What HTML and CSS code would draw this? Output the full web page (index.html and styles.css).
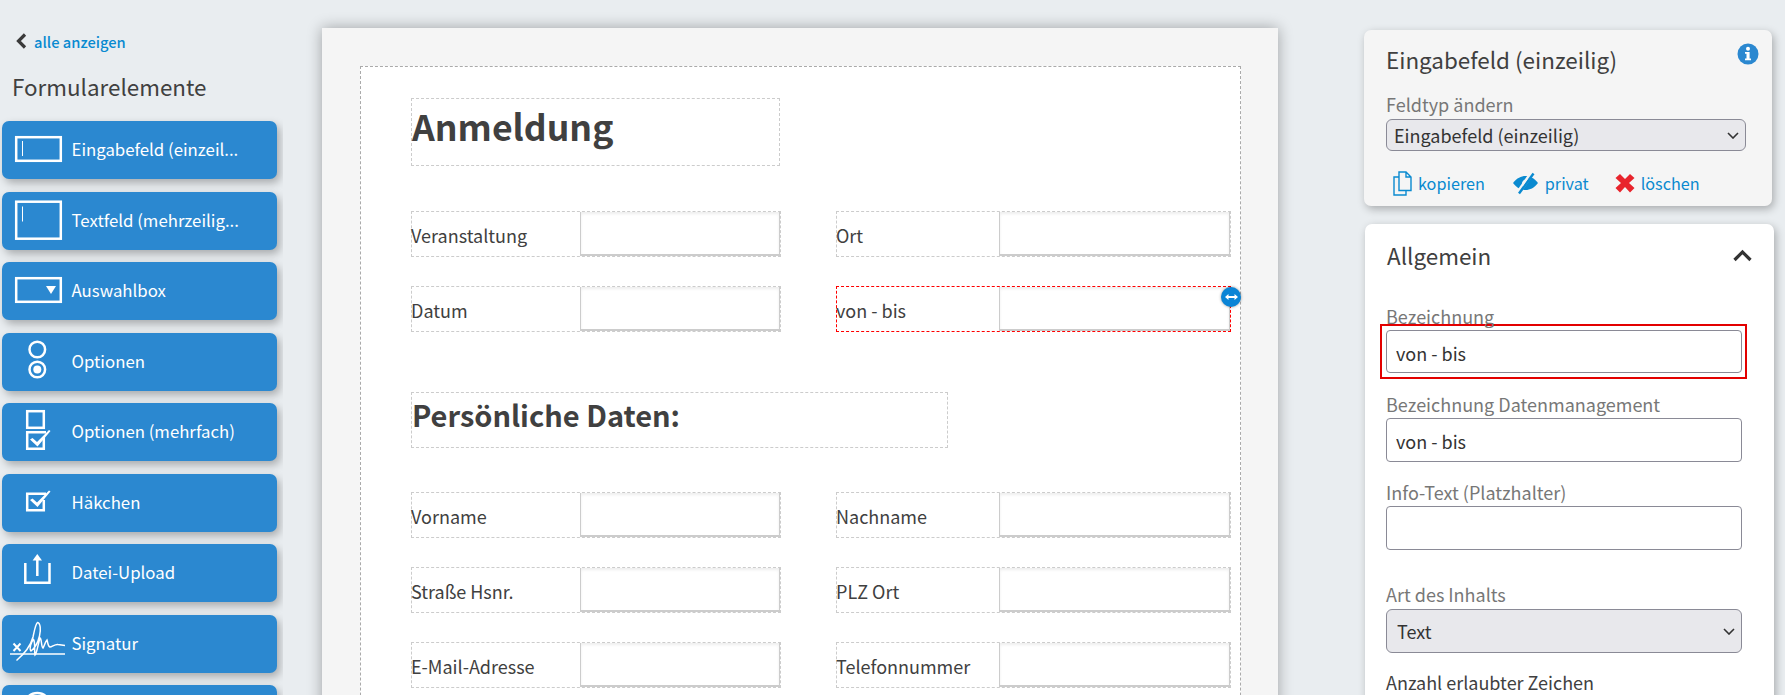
FILE: index.html
```html
<!DOCTYPE html>
<html lang="de">
<head>
<meta charset="utf-8">
<title>Formular</title>
<link rel="stylesheet" href="styles.css">
</head>
<body>
<aside class="sidebar">
  <a class="back">
    <svg class="back-icon" width="12" height="16" viewBox="0 0 12 16"><path d="M10 1.500L3.500 8L10 14.500" fill="none" stroke="#3a3a3a" stroke-width="3.200"/></svg>
    <span>alle anzeigen</span>
  </a>
  <h2 class="side-title">Formularelemente</h2>
  <div class="tool-list">
    <div class="tool">
      <svg class="tool-icon" viewBox="0 0 58 46"><rect class="ln" x="6.2" y="10.2" width="44.6" height="23.6"/><path class="thin" d="M12.5 14V29"/></svg>
      <span class="tool-label">Eingabefeld (einzeil...</span>
    </div>
    <div class="tool">
      <svg class="tool-icon" viewBox="0 0 58 46"><rect class="ln" x="6.2" y="3.7" width="44.6" height="37"/><path class="thin" d="M12.5 8.500V23.500"/></svg>
      <span class="tool-label">Textfeld (mehrzeilig...</span>
    </div>
    <div class="tool">
      <svg class="tool-icon" viewBox="0 0 58 46"><rect class="ln" x="6.2" y="10.2" width="44.6" height="23.6"/><path class="fl" d="M36 18H46L41 26Z"/></svg>
      <span class="tool-label">Auswahlbox</span>
    </div>
    <div class="tool">
      <svg class="tool-icon" viewBox="0 0 58 46"><circle class="ln" cx="27.300" cy="10.500" r="7.800"/><circle class="ln" cx="27.300" cy="30.500" r="7.800"/><circle class="fl" cx="27.300" cy="30.500" r="4"/></svg>
      <span class="tool-label">Optionen</span>
    </div>
    <div class="tool">
      <svg class="tool-icon" viewBox="0 0 58 46"><rect class="ln" x="17.200" y="2.200" width="16.600" height="16.600"/><path class="ln" d="M33.800 28V39.800H17.200V23.200H36"/><path class="fl" d="M20 30.500L22.500 29L27 33L39 21L40.500 22L27.500 37.500Z"/></svg>
      <span class="tool-label">Optionen (mehrfach)</span>
    </div>
    <div class="tool">
      <svg class="tool-icon" viewBox="0 0 58 46"><path class="ln" d="M33.800 20V30.300H17.200V13.700H36"/><path class="fl" d="M20 20L22.500 18.500L27 22.500L39 10.500L40.500 11.500L27.500 27Z"/></svg>
      <span class="tool-label">Häkchen</span>
    </div>
    <div class="tool">
      <svg class="tool-icon" viewBox="0 0 58 46"><path class="ln" d="M15.300 13V32.800H39.500V13"/><path class="ln" d="M27.300 9V26"/><path class="fl" d="M27.300 4L32 10.500H22.600Z"/></svg>
      <span class="tool-label">Datei-Upload</span>
    </div>
    <div class="tool">
      <svg class="tool-icon" viewBox="0 0 58 46"><path class="thin2" d="M0 33H55"/><path class="sig-x" d="M3.500 22.500L10.500 30M10.500 22.500L3.500 30"/><path class="sig" d="M6.500 39.500C13 34 20 27 23 16C24.500 9 25.500 3 27.500 1.500C30.500 2 31 9 29.500 15C28 21 25 27 21 30C19 28 21 21 23.500 18.500C25.500 21 24 29 25 34C27 32 28 23 30 17C32 18 31 26 33 27C34.500 25 35 21 37 19C38 22 38 26 40 26C42 26 45 23 48 23.500L55 24.500"/></svg>
      <span class="tool-label">Signatur</span>
    </div>
    <div class="tool">
      <svg class="tool-icon" viewBox="0 0 58 46"><circle class="ln" cx="27.300" cy="15" r="13"/></svg>
    </div>
  </div>
</aside>

<main class="paper">
  <div class="sheet">
    <div class="head-box head-large"><h1 class="h-large">Anmeldung</h1></div>
    <div class="rows rows-first">
      <div class="field"><span class="field-label">Veranstaltung</span><input class="field-input" type="text"></div>
      <div class="field"><span class="field-label">Ort</span><input class="field-input" type="text"></div>
      <div class="field"><span class="field-label">Datum</span><input class="field-input" type="text"></div>
      <div class="field field-active"><span class="field-label">von - bis</span><input class="field-input" type="text">
        <span class="handle"><svg width="15" height="8" viewBox="0 0 14 8"><path d="M0.500 4L4 1V3H10V1L13.500 4L10 7V5H4V7Z" fill="#fff"/></svg></span>
      </div>
    </div>
    <div class="head-box head-small"><h2 class="h-small">Persönliche Daten:</h2></div>
    <div class="rows rows-second">
      <div class="field"><span class="field-label">Vorname</span><input class="field-input" type="text"></div>
      <div class="field"><span class="field-label">Nachname</span><input class="field-input" type="text"></div>
      <div class="field"><span class="field-label">Straße Hsnr.</span><input class="field-input" type="text"></div>
      <div class="field"><span class="field-label">PLZ Ort</span><input class="field-input" type="text"></div>
      <div class="field"><span class="field-label">E-Mail-Adresse</span><input class="field-input" type="text"></div>
      <div class="field"><span class="field-label">Telefonnummer</span><input class="field-input" type="text"></div>
    </div>
  </div>
</main>

<aside class="props">
  <section class="card card-type">
    <span class="info"><svg width="22" height="22" viewBox="0 0 22 22"><circle cx="11" cy="11" r="10.500" fill="#2b88d0"/><circle cx="11" cy="5.800" r="2" fill="#fff"/><path d="M8 9H12.600V15.500H14V17.300H8V15.500H9.500V10.800H8Z" fill="#fff"/></svg></span>
    <h3 class="card-title">Eingabefeld (einzeilig)</h3>
    <label class="prop-label label-type">Feldtyp ändern</label>
    <div class="select-wrap wrap-type">
      <select class="prop-select select-type"><option>Eingabefeld (einzeilig)</option></select>
      <svg class="select-arrow" width="12" height="7" viewBox="0 0 12 7"><path d="M1 1L6 6L11 1" fill="none" stroke="#333" stroke-width="1.600"/></svg>
    </div>
    <div class="actions">
      <a class="action action-copy">
        <svg width="19" height="25" viewBox="0 0 19 25"><path d="M6 6H1V24H13V19.500M6 1H13L18 6V19.500H6Z M13 1V6H18" fill="none" stroke="#0a8ad0" stroke-width="1.400"/></svg>
        <span>kopieren</span>
      </a>
      <a class="action action-private">
        <svg width="27" height="24" viewBox="0 0 27 24"><path d="M1 12C5 7 9 5 13.500 5C18 5 22 7 26 12C22 17 18 19 13.500 19C9 19 5 17 1 12Z" fill="#0a8ad0"/><path d="M20 2L6 22" stroke="#f5f5f5" stroke-width="4.500"/><path d="M21.500 2.500L7 22.500" stroke="#0a8ad0" stroke-width="2.400"/><path d="M13 8.500L16 7.500L11 15C9 13 10 10 13 8.500Z" fill="#f5f5f5"/></svg>
        <span>privat</span>
      </a>
      <a class="action action-delete">
        <svg width="20" height="20" viewBox="0 0 20 20"><path d="M5 1L10 6L15 1L19.500 5L14 10L19.500 15L15 19.500L10 14L5 19.500L0.500 15L6 10L0.500 5Z" fill="#e8242c"/></svg>
        <span>löschen</span>
      </a>
    </div>
  </section>

  <section class="card card-general">
    <header class="general-head">
      <h3 class="card-title">Allgemein</h3>
      <svg width="19" height="13" viewBox="0 0 19 13"><path d="M1.500 11L9.500 3L17.500 11" fill="none" stroke="#333" stroke-width="3.200"/></svg>
    </header>
    <label class="prop-label label-first">Bezeichnung</label>
    <div class="marked"><input class="prop-input input-marked" type="text" value="von - bis"></div>
    <label class="prop-label label-second">Bezeichnung Datenmanagement</label>
    <input class="prop-input" type="text" value="von - bis">
    <label class="prop-label label-third">Info-Text (Platzhalter)</label>
    <input class="prop-input" type="text">
    <label class="prop-label label-fourth">Art des Inhalts</label>
    <div class="select-wrap wrap-content">
      <select class="prop-select select-content"><option>Text</option></select>
      <svg class="select-arrow" width="12" height="7" viewBox="0 0 12 7"><path d="M1 1L6 6L11 1" fill="none" stroke="#333" stroke-width="1.600"/></svg>
    </div>
    <label class="prop-label label-dark">Anzahl erlaubter Zeichen</label>
  </section>
</aside>
</body>
</html>
```
FILE: styles.css
```css
* { box-sizing: border-box; }
html, body { margin: 0; height: 695px; overflow: hidden; }
body {
  display: flex;
  align-items: flex-start;
  background: #e9edf0;
  font-family: "Noto Sans CJK SC", "Source Sans Pro", sans-serif;
  color: #404040;
}
h1, h2, h3 { margin: 0; }

/* sidebar */
.sidebar { flex: 0 0 283px; width: 283px; height: 695px; overflow: hidden; }
.back { display: flex; align-items: center; margin: 31px 0 0 15px; height: 20px; color: #0a8ad0; font-size: 14.700px; font-weight: 500; }
.back-icon { margin-right: 7px; }
.side-title { margin: 19px 0 0 12px; font-size: 22.400px; line-height: 32px; font-weight: 400; color: #404040; }
.tool-list { display: flex; flex-direction: column; gap: 12.5px; margin: 19px 0 0 2px; width: 275px; }
.tool {
  flex: 0 0 58px;
  height: 58px;
  display: flex;
  align-items: center;
  padding-left: 8px;
  background: #2b88d0;
  border-radius: 7px;
  color: #fff;
  box-shadow: 3px 4px 8px rgba(0, 0, 0, .28);
}
.tool-icon { flex: 0 0 58px; width: 58px; height: 46px; margin-right: 3.500px; }
.tool-label { display: block; padding-bottom: 2px; white-space: nowrap; font-size: 16.800px; line-height: 24px; }
.ln { fill: none; stroke: #fff; stroke-width: 2.500; }
.thin { fill: none; stroke: #fff; stroke-width: 1; }
.thin2 { fill: none; stroke: #fff; stroke-width: 1.300; }
.fl { fill: #fff; }
.sig { fill: none; stroke: #fff; stroke-width: 1.500; }
.sig-x { fill: none; stroke: #fff; stroke-width: 2; }

/* paper */
.paper {
  flex: 0 0 956px;
  width: 956px;
  height: 800px;
  margin: 28px 0 0 39px;
  padding: 38px 37px 0 38px;
  background: #f5f5f5;
  box-shadow: 0 0 14px rgba(0, 0, 0, .32);
}
.sheet { height: 800px; padding: 31px 0 0 50px; background: #fff; border: 1px dashed #aaa; }
.head-box { border: 1px dashed #ccc; }
.head-large { width: 369px; height: 68px; }
.head-small { width: 537px; height: 56px; margin-top: 60px; }
.h-large { font-size: 35.600px; line-height: 54px; font-weight: 700; color: #404040; }
.h-small { font-size: 29px; line-height: 43px; font-weight: 700; color: #404040; }
.rows { display: grid; grid-template-columns: 370px 395px; column-gap: 55px; row-gap: 29px; grid-auto-rows: 46px; }
.rows-first { margin-top: 45px; }
.rows-second { margin-top: 44px; }
.field { position: relative; display: flex; height: 46px; border: 1px dashed #ccc; }
.field-active { border-color: #f00; }
.field-label { flex: 0 0 169px; margin-left: -1px; padding-top: 8px; font-size: 18px; line-height: 30px; color: #404040; white-space: nowrap; }
.field:nth-child(even) .field-label { flex-basis: 163px; }
.field-input {
  flex: 1 1 0;
  min-width: 0;
  height: 44px;
  margin: 0;
  background: #fff;
  border: solid #ccc;
  border-width: 0 1px 2px 1px;
  box-shadow: inset 0 2px 3px rgba(0, 0, 0, .07);
  outline: none;
}
.handle {
  position: absolute;
  top: 0;
  right: -11px;
  width: 20px;
  height: 20px;
  display: flex;
  align-items: center;
  justify-content: center;
  background: #0a84d6;
  border-radius: 50%;
  box-shadow: 0 0 3px rgba(0, 0, 0, .4);
}

/* properties */
.props { flex: 0 0 411px; width: 411px; margin: 30px 0 0 86px; }
.card { position: relative; border-radius: 7px; box-shadow: 2px 3px 9px rgba(0, 0, 0, .28); }
.card-type { width: 408px; height: 176px; padding: 13px 0 0 22px; background: #f5f5f5; }
.card-general { width: 409px; height: 560px; margin: 18px 0 0 1px; padding: 15px 0 0 21px; background: #fff; }
.info { position: absolute; top: 13px; right: 13px; width: 22px; height: 22px; }
.card-title { font-size: 22.450px; line-height: 32px; font-weight: 400; color: #404040; }
.prop-label { display: block; font-size: 18px; line-height: 22px; color: #777; white-space: nowrap; }
.label-type { margin: 18px 0 4px; }
.label-first { margin: 34px 0 3px; }
.label-second { margin: 20px 0 3px; }
.label-third { margin: 19px 0 3px; }
.label-fourth { margin: 33px 0 4px; }
.label-dark { margin: 18px 0 0; color: #404040; }
.select-wrap { position: relative; }
.wrap-type { width: 360px; }
.wrap-content { width: 356px; }
.select-arrow { position: absolute; right: 7px; top: 50%; margin-top: -3px; pointer-events: none; }
.prop-select {
  display: block;
  width: 100%;
  margin: 0;
  appearance: none;
  background-color: #e8e8ec;
  border: 1px solid #8a8a96;
  border-radius: 6px;
  font-family: inherit;
  font-size: 18px;
  color: #333;
}
.select-type { height: 32px; padding: 0 0 0 7px; }
.select-content { height: 44px; padding: 0 0 0 10px; }
.prop-input {
  display: block;
  width: 356px;
  height: 44px;
  margin: 0;
  padding: 2px 9px 0;
  background: #fff;
  border: 1px solid #8a8a96;
  border-radius: 4px;
  font-family: inherit;
  font-size: 18px;
  color: #333;
}
.input-marked { height: 43px; }
.marked { width: 367px; margin: -6px 0 -6px -6px; padding: 4px 3px 4px 4px; border: 2px solid #e30000; }
.actions { display: flex; align-items: center; height: 30px; margin-top: 17px; padding-left: 7px; }
.action { display: flex; align-items: center; gap: 6px; color: #0a8ad0; font-size: 16.200px; line-height: 30px; }
.action-private { margin-left: 27px; }
.action-delete { margin-left: 26px; }
.general-head { display: flex; justify-content: space-between; align-items: center; width: 366px; height: 32px; padding-left: 1px; }
```
